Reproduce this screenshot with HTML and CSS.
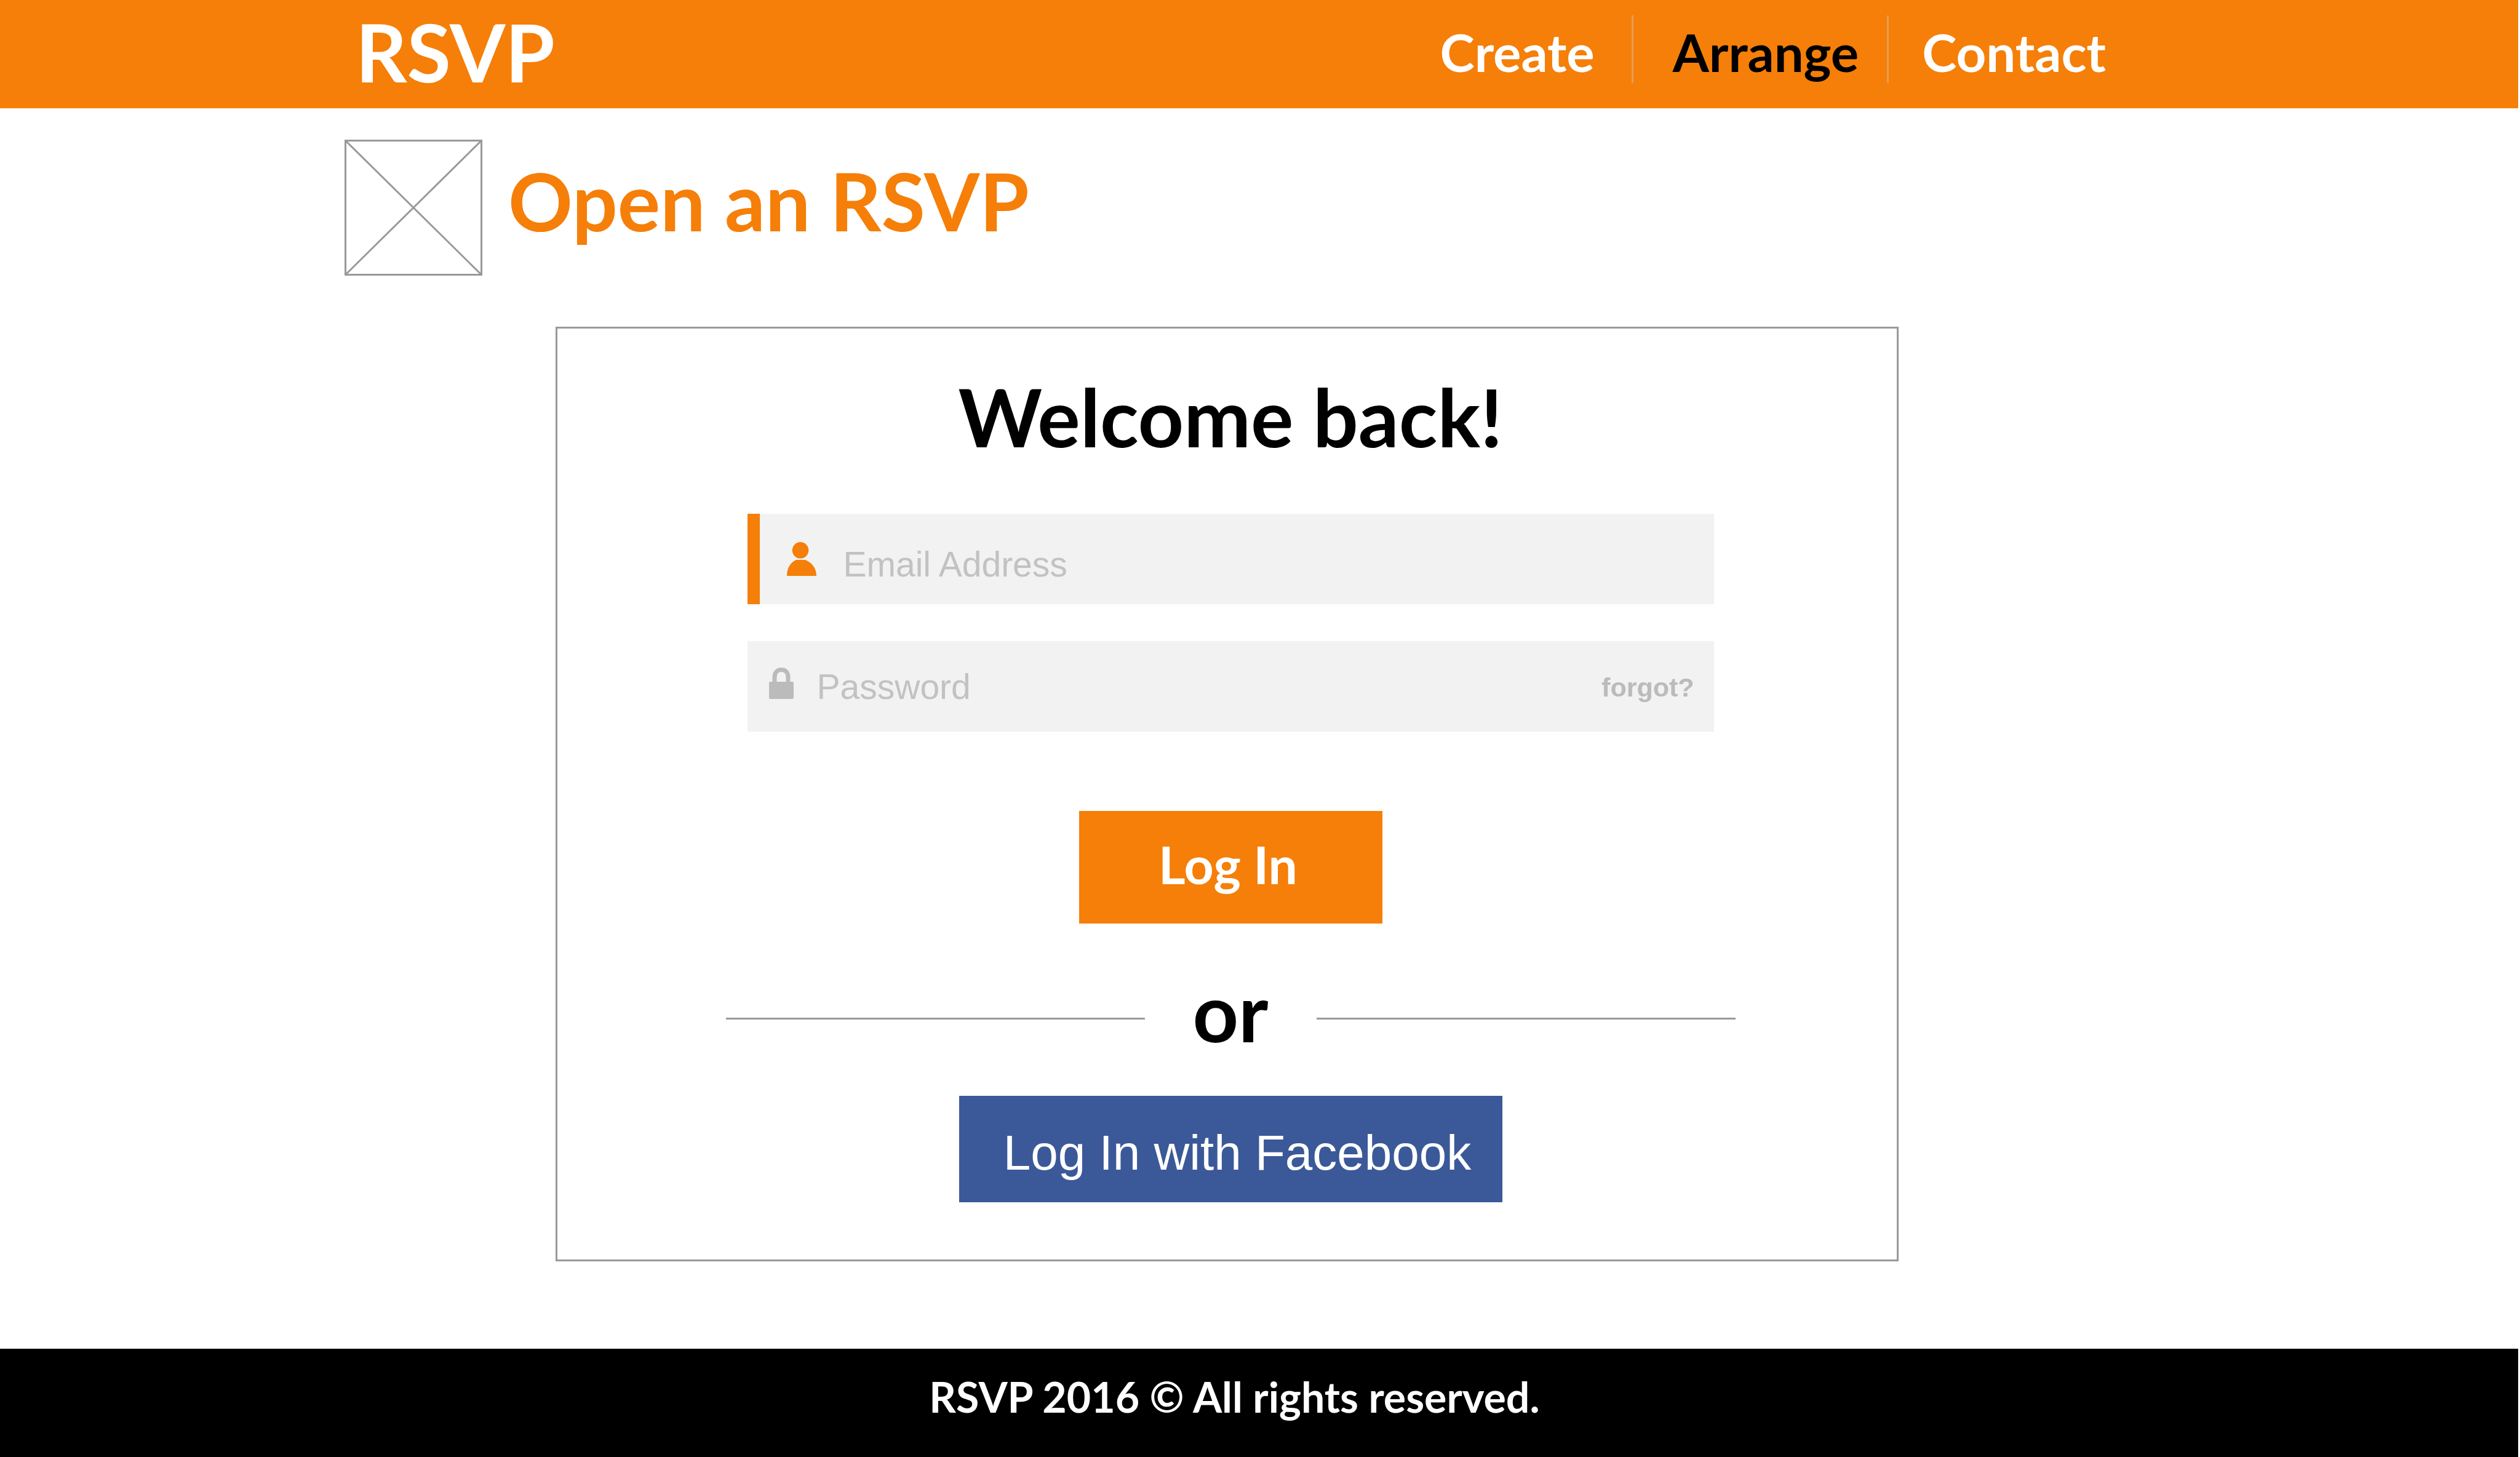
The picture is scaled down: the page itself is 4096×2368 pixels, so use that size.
FILE: index.html
```html
<!DOCTYPE html>
<html lang="en">
<head>
  <meta charset="utf-8">
  <title>Open an RSVP</title>
  <link rel="stylesheet" href="styles.css">
</head>
<body>
  <header class="site-header">
    <a class="logo" href="#">RSVP</a>
    <nav class="nav">
      <a class="nav-link" href="#">Create</a>
      <span class="nav-divider"></span>
      <a class="nav-link nav-link-active" href="#">Arrange</a>
      <span class="nav-divider"></span>
      <a class="nav-link" href="#">Contact</a>
    </nav>
  </header>

  <main class="page">
    <div class="page-title">
      <svg class="thumb" viewBox="0 0 224 221" fill="none" stroke="#999" stroke-width="3" aria-hidden="true">
        <rect x="1.5" y="1.5" width="221" height="218"/>
        <path d="M2 2L222 219M222 2L2 219"/>
      </svg>
      <h1 class="title">Open an RSVP</h1>
    </div>

    <section class="card">
      <h2 class="card-heading">Welcome back!</h2>
      <form class="login">
        <div class="field field-active">
          <label class="field-label" for="email">
            <svg class="icon-user" viewBox="0 0 48 55" fill="#f57f08" role="img" aria-label="Email address">
              <circle cx="22" cy="13.3" r="13.3"/>
              <path d="M0 55C0 42 6 33 15 29H30C40 33 48 42 48 55Z"/>
            </svg>
          </label>
          <input class="input" id="email" type="email" placeholder="Email Address">
        </div>
        <div class="field">
          <label class="field-label" for="password">
            <svg class="icon-lock" viewBox="0 0 40 51" role="img" aria-label="Password">
              <path d="M9 26V16C9 8 13 3.500 20 3.500S31 8 31 16V26" fill="none" stroke="#bbb" stroke-width="7"/>
              <rect y="23" width="40" height="28" rx="2" fill="#bbb"/>
            </svg>
          </label>
          <input class="input" id="password" type="password" placeholder="Password">
          <a class="forgot" href="#">forgot?</a>
        </div>
        <button class="button button-login" type="submit">Log In</button>
        <div class="divider">or</div>
        <button class="button button-facebook" type="button">Log In with Facebook</button>
      </form>
    </section>
  </main>

  <footer class="site-footer">RSVP 2016 © All rights reserved.</footer>
</body>
</html>
```
FILE: styles.css
```css
* {
  box-sizing: border-box;
}

body {
  display: flex;
  flex-direction: column;
  min-height: 100vh;
  margin: 0;
  background: #fff;
  color: #000;
  font-family: Lato, "Open Sans", sans-serif;
  font-weight: 700;
}

a {
  color: inherit;
  text-decoration: none;
}

h1,
h2 {
  margin: 0;
  font-size: 130px;
  font-weight: 700;
}

.site-header {
  display: flex;
  justify-content: space-between;
  margin-right: 3px;
  padding: 0 670px 8px 578px;
  background: #f57f08;
  color: #fff;
  line-height: 168px;
}

.logo {
  font-size: 130px;
}

.nav {
  display: flex;
  font-size: 85px;
}

.nav-link-active {
  margin: 0 -14px 0 10px;
  color: #000;
}

.nav-divider {
  width: 3px;
  height: 110px;
  margin: 25px 54px 0 60px;
  background: #e59c5c;
}

.page {
  flex: 1;
  padding: 51px 668px 60px 560px;
}

.page-title {
  display: flex;
  gap: 42px;
  align-items: flex-start;
}

.thumb {
  width: 224px;
  height: 221px;
}

.title {
  color: #f57f08;
  line-height: 198px;
}

.card {
  max-width: 2183px;
  margin: 83px auto 0;
  padding: 65px 40px 93px 52px;
  border: 3px solid #999;
}

.card-heading {
  line-height: 156px;
  text-align: center;
}

.login {
  display: flex;
  flex-direction: column;
  align-items: center;
  margin-top: 80px;
}

.field {
  display: flex;
  align-items: center;
  width: 100%;
  max-width: 1571px;
  height: 147px;
  padding: 0 32px 0 35px;
  background: #f2f2f2;
}

.field-active {
  margin-bottom: 60px;
  padding-left: 44px;
  border-left: 20px solid #f57f08;
}

.field-active .input {
  padding-top: 16px;
}

.field-label {
  display: flex;
}

.icon-user {
  width: 48px;
  height: 55px;
  margin-right: 44px;
}

.icon-lock {
  width: 40px;
  height: 51px;
  margin: 0 38px 10px 0;
}

.input {
  flex: 1;
  min-width: 0;
  padding: 0;
  border: 0;
  outline: 0;
  background: none;
  color: #555;
  font: 57px "Liberation Sans", sans-serif;
}

.input::placeholder {
  color: #c2c2c2;
  opacity: 1;
}

.forgot {
  padding-top: 3px;
  color: #bbb;
  font: 700 43px "Liberation Sans", sans-serif;
}

.button {
  border: 0;
  color: #fff;
}

.button-login {
  width: 493px;
  height: 183px;
  margin-top: 129px;
  padding: 0 8px 10px 0;
  background: #f57f08;
  font: 700 84px Lato, "Open Sans", sans-serif;
}

.divider {
  display: grid;
  grid-template-columns: 1fr 279px 1fr;
  align-items: center;
  width: 100%;
  max-width: 1641px;
  margin: 65px 0 59px;
  font-size: 130px;
  line-height: 156px;
  text-align: center;
}

.divider::before,
.divider::after {
  height: 3px;
  margin-top: 22px;
  background: #999;
  content: "";
}

.button-facebook {
  width: 883px;
  height: 173px;
  padding: 12px 0 0 22px;
  background: #3b5998;
  font: 80px "Liberation Sans", sans-serif;
}

.site-footer {
  margin-right: 3px;
  padding: 0 640px 20px 560px;
  background: #000;
  color: #fff;
  font-size: 68px;
  line-height: 156px;
  text-align: center;
}
```
